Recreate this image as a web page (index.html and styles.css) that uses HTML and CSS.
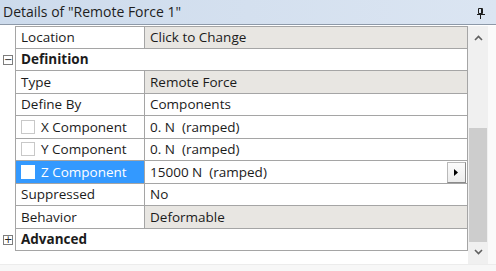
FILE: index.html
```html
<!DOCTYPE html>
<html>
<head>
<meta charset="utf-8">
<link rel="stylesheet" href="styles.css">
</head>
<body>
<div class="panel">
  <div class="title">
    <span class="title-text">Details of "Remote Force 1"</span>
    <svg class="pin" width="10" height="12" viewBox="0 0 10 12">
      <path d="M2.5 1.5h4v5h-4z" fill="none" stroke="#1e1e1e" stroke-width="1"/>
      <path d="M5.5 1.5v5" stroke="#1e1e1e" stroke-width="1"/>
      <path d="M1 7.5h8" stroke="#1e1e1e" stroke-width="1"/>
      <path d="M4.5 8v4" stroke="#1e1e1e" stroke-width="1"/>
    </svg>
  </div>
  <div class="main">
    <div class="grid-wrap">
      <div class="grid">
        <div class="row first">
          <div class="gutter"></div>
          <div class="cells">
            <div class="name">Location</div>
            <div class="value ro">Click to Change</div>
          </div>
        </div>
        <div class="row">
          <div class="gutter"><span class="toggle">&minus;</span></div>
          <div class="cells">
            <div class="cat">Definition</div>
          </div>
        </div>
        <div class="row">
          <div class="gutter"></div>
          <div class="cells">
            <div class="name">Type</div>
            <div class="value ro">Remote Force</div>
          </div>
        </div>
        <div class="row">
          <div class="gutter"></div>
          <div class="cells">
            <div class="name">Define By</div>
            <div class="value">Components</div>
          </div>
        </div>
        <div class="row">
          <div class="gutter"></div>
          <div class="cells">
            <div class="name"><span class="check"></span>X Component</div>
            <div class="value">0. N&nbsp;&nbsp;(ramped)</div>
          </div>
        </div>
        <div class="row">
          <div class="gutter"></div>
          <div class="cells">
            <div class="name"><span class="check"></span>Y Component</div>
            <div class="value">0. N&nbsp;&nbsp;(ramped)</div>
          </div>
        </div>
        <div class="row">
          <div class="gutter"></div>
          <div class="cells">
            <div class="name sel"><span class="check"></span>Z Component</div>
            <div class="value">15000 N&nbsp;&nbsp;(ramped)<span class="dd"><svg width="5" height="7" viewBox="0 0 5 7"><path d="M0 0L4 3.5L0 7z" fill="#000"/></svg></span></div>
          </div>
        </div>
        <div class="row">
          <div class="gutter"></div>
          <div class="cells">
            <div class="name">Suppressed</div>
            <div class="value">No</div>
          </div>
        </div>
        <div class="row">
          <div class="gutter"></div>
          <div class="cells">
            <div class="name">Behavior</div>
            <div class="value ro">Deformable</div>
          </div>
        </div>
        <div class="row">
          <div class="gutter"><span class="toggle">+</span></div>
          <div class="cells">
            <div class="cat">Advanced</div>
          </div>
        </div>
      </div>
    </div>
    <div class="scrollbar">
      <div class="arrow up"><svg width="9" height="6" viewBox="0 0 9 6"><path d="M1 5L4.5 1.5L8 5" fill="none" stroke="#606060" stroke-width="1.6"/></svg></div>
      <div class="track"><div class="thumb"></div></div>
      <div class="arrow down"><svg width="9" height="6" viewBox="0 0 9 6"><path d="M1 1L4.5 4.5L8 1" fill="none" stroke="#606060" stroke-width="1.6"/></svg></div>
    </div>
    <div class="edge"></div>
  </div>
  <div class="footer"></div>
</div>
</body>
</html>
```

FILE: styles.css
```css
* { box-sizing: border-box; }
html, body { margin: 0; padding: 0; }
body {
  width: 496px;
  height: 271px;
  overflow: hidden;
  background: #ffffff;
  font-family: "Open Sans", "Noto Sans", sans-serif;
  font-size: 13.5px;
  color: #1b1b1b;
}
.panel { display: flex; flex-direction: column; height: 271px; }
.title {
  height: 25px;
  flex: none;
  display: flex;
  align-items: center;
  justify-content: space-between;
  padding: 0 10px 1px 3px;
  background: linear-gradient(to right, #cddbec, #dbe5f2);
  border-bottom: 1px solid #8d99a8;
  color: #1e1e1e;
  font-size: 14px;
}
.pin { display: block; margin-top: 2px; }
.main {
  display: flex;
  height: 238px;
  flex: none;
  margin-top: 1px;
}
.grid-wrap { width: 468px; flex: none; }
.grid { display: flex; flex-direction: column; }
.row { display: flex; height: 22.5px; }
.gutter {
  width: 15px;
  flex: none;
  display: flex;
  align-items: center;
  justify-content: center;
}
.toggle {
  width: 10px;
  height: 10px;
  border: 1px solid #7d7d7d;
  background: #fff;
  font-size: 10px;
  line-height: 7px;
  text-align: center;
  font-family: "DejaVu Sans", sans-serif;
  color: #222;
  margin-left: 1px;
}
.cells {
  flex: 1;
  display: flex;
  border-left: 1px solid #a5a5a5;
  border-right: 1px solid #a5a5a5;
  border-bottom: 1px solid #a5a5a5;
}
.row.first .cells { border-top: 1px solid #a5a5a5; }
.name {
  width: 129px;
  flex: none;
  display: flex;
  align-items: center;
  padding-left: 5px;
  border-right: 1px solid #a5a5a5;
  white-space: nowrap;
}
.name.sel { background: #3399ff; color: #ffffff; }
.value {
  flex: 1;
  display: flex;
  align-items: center;
  padding-left: 5px;
  white-space: nowrap;
  position: relative;
}
.value.ro { background: #e8e6e2; }
.cat {
  flex: 1;
  display: flex;
  align-items: center;
  padding-left: 5px;
  font-weight: 700;
}
.check {
  width: 14px;
  height: 14px;
  flex: none;
  border: 1px solid #c8c8c8;
  background: #ffffff;
  margin-right: 6px;
}
.name.sel .check { border-color: #ffffff; }
.dd {
  position: absolute;
  right: 1px;
  top: 1px;
  bottom: 0;
  width: 19px;
  display: flex;
  align-items: center;
  justify-content: center;
  background: linear-gradient(#fbfbfb, #ececec);
  border: 1px solid #b9b9b9;
  border-right-color: #8a8a8a;
  border-bottom-color: #8a8a8a;
}
.dd svg { display: block; }
.scrollbar {
  width: 20px;
  flex: none;
  display: flex;
  flex-direction: column;
  background: #f0f0f0;
}
.arrow {
  height: 22px;
  flex: none;
  display: flex;
  align-items: center;
  justify-content: center;
}
.arrow svg { display: block; }
.arrow.up { align-items: flex-start; padding-top: 9px; }
.arrow.down { align-items: flex-end; padding-bottom: 9px; }
.track { flex: 1; display: flex; flex-direction: column; padding: 80px 1px 0 1px; }
.thumb { height: 114px; background: #cdcdcd; }
.edge { flex: 1; background: #fafafa; }
.footer {
  flex: 1;
  border-top: 1px solid #ececec;
  background: #f7f7f7;
}
```
